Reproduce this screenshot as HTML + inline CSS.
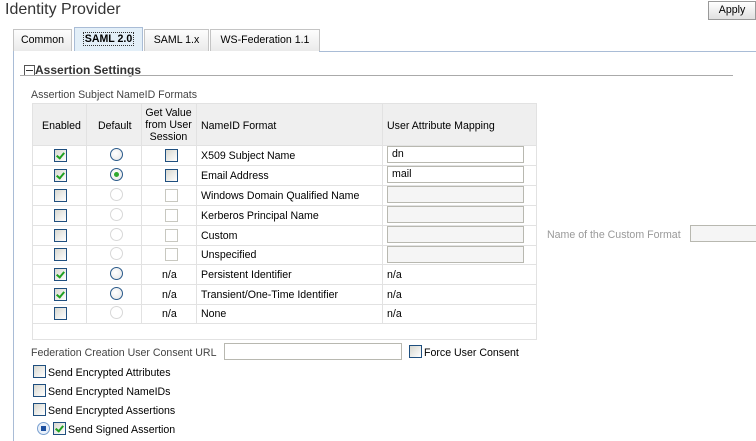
<!DOCTYPE html>
<html><head><style>
body{margin:0;width:756px;height:441px;overflow:hidden;background:#fff;font-family:"Liberation Sans",sans-serif;font-size:10.6px;color:#000;position:relative}
.a{position:absolute;white-space:nowrap}
.cb{position:absolute;width:11px;height:11px;border:1px solid #1f4f7f;background:linear-gradient(135deg,#d8d8d0,#fff);}
.cb.d{border-color:#c8c8c0;background:#fff}
.ck::after{content:"";position:absolute;left:3px;top:1px;width:3px;height:6px;border:solid #21a121;border-width:0 2px 2px 0;transform:rotate(40deg)}
.rd{position:absolute;width:11px;height:11px;border:1px solid #2a5a8a;border-radius:50%;background:radial-gradient(circle at 40% 40%,#fff,#e4e4e4)}
.rd.d{border-color:#d8d8d8;background:#fff}
.rd.s::after{content:"";position:absolute;left:3px;top:3px;width:5px;height:5px;border-radius:50%;background:#2fa82f}
.in{position:absolute;height:15px;border:1px solid #b8b8b0;background:#fff;padding-left:4px;line-height:15px;box-sizing:content-box}
.in.d{background:#f5f5f5}
.hl{position:absolute;height:1px;background:#e2e2e2}
.vl{position:absolute;width:1px;background:#e2e2e2}
.tab{position:absolute;top:29px;height:22px;border:1px solid #c4c4c4;border-bottom:none;background:linear-gradient(#fdfdfd,#eaeaea);text-align:center;line-height:21px;box-sizing:border-box}
.t{position:absolute;white-space:nowrap;margin-top:1px}
</style></head><body>
<div class="a" style="left:5px;top:1px;font-size:16px;color:#333">Identity Provider</div>
<div class="a" style="left:708px;top:1px;width:48px;height:19px;border:1px solid #999;box-sizing:border-box;background:linear-gradient(#fff,#e0e0e0);text-align:center;line-height:17px">Apply</div>

<div class="a" style="left:319px;top:51px;width:437px;height:1px;background:#a9bcd6"></div>
<div class="a" style="left:13px;top:51px;width:1px;height:390px;background:#a9bcd6"></div>
<div class="tab" style="left:13px;width:59px">Common</div>
<div class="tab" style="left:74px;width:69px;background:#e3eff8;border-color:#a9bcd6;height:24px;top:27px;font-weight:bold;line-height:23px"><span style="border:1px dotted #333;padding:0 1px">SAML 2.0</span></div>
<div class="tab" style="left:144px;width:65px">SAML 1.x</div>
<div class="tab" style="left:210px;width:110px">WS-Federation 1.1</div>

<div class="a" style="left:24px;top:65px;width:9px;height:9px;border:1px solid #555;background:#fff"></div>
<div class="a" style="left:26px;top:70px;width:7px;height:1px;background:#333"></div>
<div class="a" style="left:35px;top:63px;font-size:12px;font-weight:bold;color:#333">Assertion Settings</div>
<div class="a" style="left:20px;top:75px;width:713px;height:1px;background:#aaa"></div>

<div class="a" style="left:31px;top:89px;color:#444">Assertion Subject NameID Formats</div>

<div class="a" style="left:32px;top:103px;width:505px;height:237px;border:1px solid #e2e2e2;box-sizing:border-box"></div>
<div class="a" style="left:33px;top:104px;width:503px;height:41px;background:#efefef"></div>
<div class="vl" style="left:86px;top:103px;height:220px"></div>
<div class="vl" style="left:141px;top:103px;height:220px"></div>
<div class="vl" style="left:196px;top:103px;height:220px"></div>
<div class="vl" style="left:382px;top:103px;height:220px"></div>
<div class="hl" style="left:32px;top:145px;width:505px"></div>
<div class="hl" style="left:32px;top:165px;width:505px"></div>
<div class="hl" style="left:32px;top:185px;width:505px"></div>
<div class="hl" style="left:32px;top:205px;width:505px"></div>
<div class="hl" style="left:32px;top:225px;width:505px"></div>
<div class="hl" style="left:32px;top:245px;width:505px"></div>
<div class="hl" style="left:32px;top:264px;width:505px"></div>
<div class="hl" style="left:32px;top:284px;width:505px"></div>
<div class="hl" style="left:32px;top:304px;width:505px"></div>
<div class="hl" style="left:32px;top:323px;width:505px"></div>

<div class="t" style="left:42px;top:119px">Enabled</div>
<div class="t" style="left:98px;top:119px">Default</div>
<div class="a" style="left:141px;top:107px;width:55px;text-align:center;line-height:12px;white-space:normal">Get Value from User Session</div>
<div class="t" style="left:201px;top:119px">NameID Format</div>
<div class="t" style="left:387px;top:119px">User Attribute Mapping</div>

<div class="cb ck" style="left:54px;top:149px"></div><div class="rd" style="left:110px;top:148px"></div><div class="cb" style="left:165px;top:149px"></div><div class="t" style="left:201px;top:149px">X509 Subject Name</div><div class="in" style="left:387px;top:146px;width:131px">dn</div>
<div class="cb ck" style="left:54px;top:169px"></div><div class="rd s" style="left:110px;top:168px"></div><div class="cb" style="left:165px;top:169px"></div><div class="t" style="left:201px;top:169px">Email Address</div><div class="in" style="left:387px;top:166px;width:131px">mail</div>
<div class="cb" style="left:54px;top:189px"></div><div class="rd d" style="left:110px;top:188px"></div><div class="cb d" style="left:165px;top:189px"></div><div class="t" style="left:201px;top:189px">Windows Domain Qualified Name</div><div class="in d" style="left:387px;top:186px;width:131px"></div>
<div class="cb" style="left:54px;top:209px"></div><div class="rd d" style="left:110px;top:208px"></div><div class="cb d" style="left:165px;top:209px"></div><div class="t" style="left:201px;top:209px">Kerberos Principal Name</div><div class="in d" style="left:387px;top:206px;width:131px"></div>
<div class="cb" style="left:54px;top:229px"></div><div class="rd d" style="left:110px;top:228px"></div><div class="cb d" style="left:165px;top:229px"></div><div class="t" style="left:201px;top:229px">Custom</div><div class="in d" style="left:387px;top:226px;width:131px"></div>
<div class="cb" style="left:54px;top:248px"></div><div class="rd d" style="left:110px;top:247px"></div><div class="cb d" style="left:165px;top:248px"></div><div class="t" style="left:201px;top:248px">Unspecified</div><div class="in d" style="left:387px;top:246px;width:131px"></div>
<div class="cb ck" style="left:54px;top:268px"></div><div class="rd" style="left:110px;top:267px"></div><div class="t" style="left:162px;top:268px">n/a</div><div class="t" style="left:201px;top:268px">Persistent Identifier</div><div class="t" style="left:387px;top:268px">n/a</div>
<div class="cb ck" style="left:54px;top:288px"></div><div class="rd" style="left:110px;top:287px"></div><div class="t" style="left:162px;top:288px">n/a</div><div class="t" style="left:201px;top:288px">Transient/One-Time Identifier</div><div class="t" style="left:387px;top:288px">n/a</div>
<div class="cb" style="left:54px;top:307px"></div><div class="rd d" style="left:110px;top:306px"></div><div class="t" style="left:162px;top:307px">n/a</div><div class="t" style="left:201px;top:307px">None</div><div class="t" style="left:387px;top:307px">n/a</div>

<div class="t" style="left:547px;top:228px;color:#999">Name of the Custom Format</div>
<div class="in d" style="left:690px;top:225px;width:70px"></div>

<div class="t" style="left:31px;top:346px;color:#444">Federation Creation User Consent URL</div>
<div class="in" style="left:224px;top:343px;width:172px"></div>
<div class="cb" style="left:409px;top:345px"></div>
<div class="t" style="left:424px;top:346px">Force User Consent</div>

<div class="cb" style="left:33px;top:365px"></div><div class="t" style="left:48px;top:366px">Send Encrypted Attributes</div>
<div class="cb" style="left:33px;top:384px"></div><div class="t" style="left:48px;top:385px">Send Encrypted NameIDs</div>
<div class="cb" style="left:33px;top:403px"></div><div class="t" style="left:48px;top:404px">Send Encrypted Assertions</div>
<div class="a" style="left:37px;top:422px;width:11px;height:11px;border:1px solid #7aa0d0;border-radius:50%;background:#e8f0fa"></div>
<div class="a" style="left:41px;top:426px;width:5px;height:5px;background:#1c4f9f"></div>
<div class="cb ck" style="left:53px;top:422px"></div><div class="t" style="left:68px;top:423px">Send Signed Assertion</div>
</body></html>
